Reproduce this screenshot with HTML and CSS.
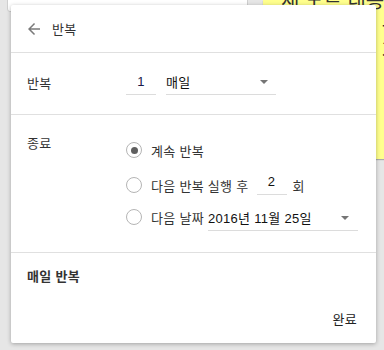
FILE: index.html
```html
<!DOCTYPE html>
<html lang="ko">
<head>
<meta charset="utf-8">
<link rel="stylesheet" href="styles.css">
</head>
<body>
<div class="desk">
  <div class="bg-card"></div>
  <div class="note">
    <div class="note-line note-l1">새 노트 내용 적</div>
    <div class="note-line note-l2">내용이 큰</div>
    <div class="note-line note-l3">글자 가</div>
  </div>

  <div class="dialog">
    <div class="header">
      <svg class="back" width="18" height="18" viewBox="0 0 24 24"><path d="M20 11H7.83l5.59-5.59L12 4l-8 8 8 8 1.41-1.41L7.83 13H20v-2z" fill="#7a7a7a"/></svg>
      <span class="title">반복</span>
    </div>
    <div class="section sec-repeat">
      <span class="label">반복</span>
      <div class="num-input num-1">1</div>
      <div class="select sel-freq"><span>매일</span><span class="caret"></span></div>
    </div>
    <div class="section sec-end">
      <span class="label end-label">종료</span>
      <div class="options">
        <div class="opt opt-1"><span class="radio on"></span><span>계속 반복</span></div>
        <div class="opt opt-2"><span class="radio"></span><span>다음 반복 실행 후</span><div class="num-input num-2">2</div><span>회</span></div>
        <div class="opt opt-3"><span class="radio"></span><span>다음 날짜</span><div class="select sel-date"><span>2016년 11월 25일</span><span class="caret"></span></div></div>
      </div>
    </div>
    <div class="section sec-summary">
      <div class="summary">매일 반복</div>
      <div class="actions"><span class="done">완료</span></div>
    </div>
  </div>
</div>
</body>
</html>
```
FILE: styles.css
```css
* { box-sizing: border-box; }
html, body { margin: 0; padding: 0; }
body {
  width: 384px;
  height: 350px;
  overflow: hidden;
  background: #e6e6e6;
  font-family: "Liberation Sans", "Noto Sans CJK KR", sans-serif;
  font-size: 13px;
  color: #333;
}
.desk { position: relative; width: 384px; height: 350px; }

.bg-card {
  position: absolute;
  left: 7px;
  top: -6px;
  width: 241px;
  height: 18px;
  background: #fff;
  border: 1px solid #cfcfcf;
  border-radius: 3px;
}

.note {
  position: absolute;
  left: 263px;
  top: 0;
  width: 121px;
  height: 159px;
  background: #ffff8d;
  box-shadow: 0 1px 1px rgba(0,0,0,0.25);
  overflow: hidden;
  font-family: "Noto Sans CJK KR", sans-serif;
  color: #333;
  font-size: 20px;
  line-height: 25px;
}
.note-line { white-space: nowrap; padding-left: 18px; }
.note-l1 { margin-top: -13px; }
.note-l2 { padding-left: 58px; }
.note-l3 { padding-left: 76px; }

.dialog {
  position: absolute;
  left: 11px;
  top: 5px;
  width: 365px;
  height: 338px;
  background: #fff;
  border-radius: 2px;
  box-shadow: 0 1px 4px rgba(0,0,0,0.3);
  display: flex;
  flex-direction: column;
  letter-spacing: 0.3px;
}

.header {
  height: 48px;
  display: flex;
  align-items: center;
  padding-left: 14px;
  border-bottom: 1px solid #e0e0e0;
}
.back { margin-right: 9px; margin-top: 0; }
.title { font-size: 13px; color: #333; }

.section { border-bottom: 1px solid #e0e0e0; }

.label { color: #333; }

.sec-repeat {
  display: flex;
  align-items: center;
  height: 62px;
  padding: 16px 0 19px 16px;
}
.sec-repeat .label { width: 99px; }

.num-input {
  width: 30px;
  height: 26px;
  border-bottom: 1px solid #dcdcdc;
  display: flex;
  align-items: center;
  justify-content: center;
  color: #111;
  flex: none;
}
.num-1 { color: #1a1a4a; margin-right: 10px; }

.select {
  height: 26px;
  border-bottom: 1px solid #dcdcdc;
  display: flex;
  align-items: center;
  justify-content: space-between;
  color: #111;
  padding-right: 8px;
  flex: none;
}
.sel-freq { width: 110px; }
.caret {
  width: 0;
  height: 0;
  border-left: 4px solid transparent;
  border-right: 4px solid transparent;
  border-top: 4px solid #757575;
  margin-top: 1px;
}

.sec-end {
  display: flex;
  height: 138px;
  padding: 21px 0 0 16px;
}
.end-label { width: 99px; margin-top: -1px; line-height: 18px; }
.options { display: flex; flex-direction: column; }
.opt { display: flex; align-items: center; height: 28px; white-space: nowrap; }
.opt-2 { margin-top: 7px; }
.opt-3 { margin-top: 4px; }
.radio {
  width: 16px;
  height: 16px;
  border: 1.5px solid #b5b5b5;
  border-radius: 50%;
  margin-right: 9px;
  display: flex;
  align-items: center;
  justify-content: center;
  flex: none;
}
.radio.on::after {
  content: "";
  width: 7px;
  height: 7px;
  border-radius: 50%;
  background: #5f5f5f;
}
.opt-2 .num-input { margin-left: 8px; margin-right: 6px; align-self: flex-start; height: 26px; margin-top: -2px; }
.sel-date { width: 150px; margin-left: 4px; height: 27px; margin-top: 1px; padding-right: 9px; }

.sec-summary {
  border-bottom: none;
  flex: 1;
  display: flex;
  flex-direction: column;
  padding: 15px 19px 14px 16px;
}
.summary { line-height: 18px; color: #333; font-weight: 600; }
.actions { margin-top: auto; display: flex; justify-content: flex-end; }
.done { line-height: 18px; color: #222; }
```
